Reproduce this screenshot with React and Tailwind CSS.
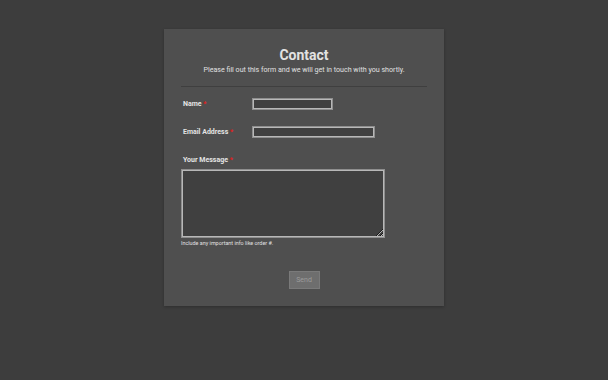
import React from "react";

function Label({ children }) {
  return (
    <span className="text-[7px] leading-[8px] font-bold text-[#e4e4e4]">
      {children} <span className="text-[#e02020]">*</span>
    </span>
  );
}

export default function App() {
  return (
    <div
      className="min-h-[380px] w-full bg-[#3d3d3d] flex justify-center items-start pt-[29px]"
      style={{ fontFamily: "Roboto, 'Noto Sans', sans-serif" }}
    >
      <div className="w-[280px] bg-[#4f4f4f] px-[17px] pt-[18px] pb-[17px] flex flex-col shadow-[0_1px_3px_rgba(0,0,0,0.25)]">
        <h1 className="text-center text-[14px] leading-[16px] font-bold text-[#e2e2e2]">Contact</h1>
        <p className="mt-[3px] text-center text-[7.1px] leading-[8px] text-[#e0e0e0]">
          Please fill out this form and we will get in touch with you shortly.
        </p>
        <div className="mt-[12px] border-t border-[#3f3f3f]" />

        <div className="mt-[11px] flex items-center text-[7px] leading-[8px]">
          <div className="w-[71px] pl-[2px]">
            <Label>Name</Label>
          </div>
          <input className="w-[81px] h-[12px] bg-[#404040] border border-[#8e8e8e] shadow-[inset_0_0_0_1px_#b8b8b8] outline-none" />
        </div>

        <div className="mt-[16px] flex items-center text-[7px] leading-[8px]">
          <div className="w-[71px] pl-[2px]">
            <Label>Email Address</Label>
          </div>
          <input className="w-[123px] h-[12px] bg-[#404040] border border-[#8e8e8e] shadow-[inset_0_0_0_1px_#b8b8b8] outline-none" />
        </div>

        <div className="mt-[18px] pl-[2px] text-[7px] leading-[8px]">
          <Label>Your Message</Label>
        </div>
        <textarea className="mt-[5px] w-[204px] h-[69px] shrink-0 bg-[#404040] border border-[#8e8e8e] shadow-[inset_0_0_0_1px_#b8b8b8] outline-none block" />
        <p className="mt-[2px] text-[5.4px] leading-[6px] text-[#e0e0e0]">
          Include any important info like order #.
        </p>

        <div className="mt-[25px] flex justify-center">
          <button className="w-[31px] h-[18px] bg-[#6e6e6e] border border-[#7a7a7a] text-[7px] leading-[8px] text-[#9c9c9c]">
            Send
          </button>
        </div>
      </div>
    </div>
  );
}
